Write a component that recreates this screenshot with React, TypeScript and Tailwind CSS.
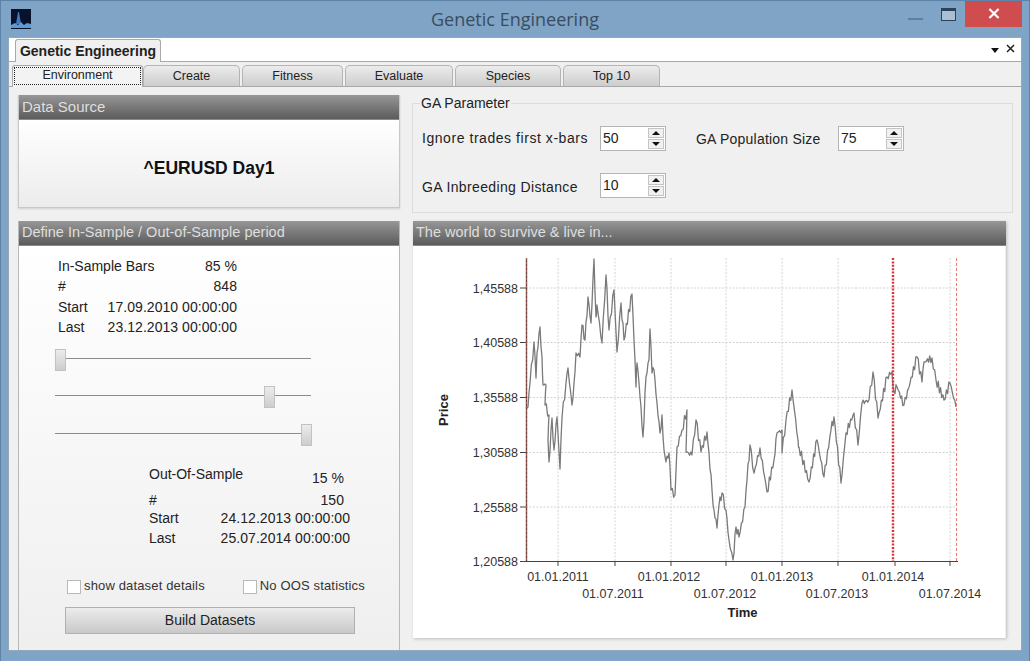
const font = "font-['Liberation_Sans',Arial,sans-serif]";

// rough price curve read off the picture, in page pixels
const anchors: number[][] = [
  [527, 407], [529, 407], [531, 383], [535, 342], [537, 378], [538, 353], [541, 327], [543, 357], [544, 385], [547, 385], [546, 405], [550, 415],
  [549, 440], [550, 462], [553, 418], [555, 450], [558, 417], [561, 469], [563, 418], [567, 383], [569, 368], [573, 405], [575, 383], [577, 353],
  [581, 357], [583, 325], [586, 340], [589, 297], [592, 323], [595, 259], [597, 317], [598, 305], [603, 343], [607, 275], [610, 330], [615, 290],
  [618, 352], [622, 303], [625, 340], [633, 294], [635, 340], [637, 387], [638, 363], [640, 383], [642, 407], [644, 437], [647, 377], [650, 360],
  [651, 329], [653, 373], [655, 370], [658, 403], [661, 433], [663, 415], [665, 450], [667, 462], [670, 453], [672, 490], [676, 495], [678, 447],
  [683, 430], [688, 410], [687, 452], [693, 455], [697, 420], [702, 452], [708, 432], [710, 453], [713, 490], [715, 510], [718, 528], [720, 505],
  [723, 493], [727, 510], [730, 540], [734, 560], [737, 527], [740, 537], [746, 507], [748, 480], [751, 445], [755, 473], [761, 448], [768, 492],
  [775, 460], [778, 433], [783, 430], [783, 453], [787, 420], [793, 390], [799, 440], [800, 447], [810, 482], [818, 440], [825, 477], [832, 430],
  [835, 417], [842, 483], [847, 433], [855, 413], [859, 445], [863, 403], [870, 400], [874, 372], [879, 418], [888, 377], [893, 372], [895, 392],
  [898, 387], [905, 405], [918, 357], [923, 382], [925, 362], [933, 358], [937, 380], [945, 400], [951, 383], [957, 407],
];

// the real series is a lot more jagged than the anchors, so add some fixed noise between them
const pricePoints = anchors
  .flatMap((p, i) => {
    const n = anchors[i + 1];
    if (!n) return [p];
    const out = [p];
    const steps = Math.max(2, Math.round((n[0] - p[0]) / 1.2));
    for (let s = 1; s < steps; s++) {
      const f = s / steps;
      const noise = Math.sin(i * 7.1 + s * 2.9) * 4.5;
      const y = p[1] + (n[1] - p[1]) * f + noise;
      out.push([p[0] + (n[0] - p[0]) * f, Math.min(560, Math.max(259, y))]);
    }
    return out;
  })
  .map(p => p.join(','))
  .join(' ');

const gridY = [288, 342.5, 397.5, 452.5, 507];
const gridX = [559, 616, 672, 727, 783, 839, 951];
const ticksX = [559, 616, 672, 727, 783, 839, 896, 951];
const priceLabels = [
  { y: 288, t: '1,45588' },
  { y: 342.5, t: '1,40588' },
  { y: 397.5, t: '1,35588' },
  { y: 452.5, t: '1,30588' },
  { y: 507, t: '1,25588' },
  { y: 561.5, t: '1,20588' },
];
const dateLabels = [
  { x: 559, y: 581, t: '01.01.2011' },
  { x: 614, y: 598, t: '01.07.2011' },
  { x: 670, y: 581, t: '01.01.2012' },
  { x: 726, y: 598, t: '01.07.2012' },
  { x: 783, y: 581, t: '01.01.2013' },
  { x: 838, y: 598, t: '01.07.2013' },
  { x: 894, y: 581, t: '01.01.2014' },
  { x: 951, y: 598, t: '01.07.2014' },
];

function PriceChart() {
  return (
    <svg viewBox="414 246 592 392" className="block w-[592px] h-[392px] bg-white">
      {gridY.map(y => (
        <line key={y} x1={527} x2={957} y1={y} y2={y} stroke="#d2d2d2" strokeDasharray="2 1.5" />
      ))}
      {gridX.map(x => (
        <line key={x} x1={x} x2={x} y1={258} y2={561} stroke="#d6d6d6" strokeDasharray="2 1.5" />
      ))}
      <polyline points={pricePoints} fill="none" stroke="#7a7a7a" strokeWidth={1.3} strokeLinejoin="round" />
      <line x1={527.5} x2={527.5} y1={258} y2={562} stroke="#5b4642" strokeWidth={1.4} />
      <line x1={527.5} x2={527.5} y1={258} y2={562} stroke="#a8584c" strokeWidth={1} strokeDasharray="2 2" />
      <line x1={894} x2={894} y1={258} y2={561} stroke="#d8343a" strokeWidth={2.4} strokeDasharray="2 1.4" />
      <line x1={957.5} x2={957.5} y1={258} y2={561} stroke="#e2806f" strokeWidth={1} strokeDasharray="3 2" />
      <line x1={527} x2={959} y1={561.5} y2={561.5} stroke="#444" strokeWidth={1.2} />
      {ticksX.map(x => (
        <line key={x} x1={x} x2={x} y1={561} y2={566} stroke="#444" />
      ))}
      {gridY.map(y => (
        <line key={y} x1={521} x2={527} y1={y} y2={y} stroke="#444" />
      ))}
      <line x1={521} x2={527} y1={561.5} y2={561.5} stroke="#444" />
      {priceLabels.map(l => (
        <text key={l.t} x={519} y={l.y + 4.5} textAnchor="end" fontSize={12.5} fill="#333">
          {l.t}
        </text>
      ))}
      {dateLabels.map(l => (
        <text key={l.t} x={l.x} y={l.y} textAnchor="middle" fontSize={12.5} fill="#333">
          {l.t}
        </text>
      ))}
      <text x={743.5} y={617} textAnchor="middle" fontSize={13} fontWeight="bold" fill="#222">
        Time
      </text>
      <text transform="translate(449 410) rotate(-90)" textAnchor="middle" fontSize={13} fontWeight="bold" fill="#222">
        Price
      </text>
    </svg>
  );
}

function CardHeader({ title, size = 'text-[14.5px]' }: { title: string; size?: string }) {
  return (
    <div className={`h-[25px] shrink-0 flex items-center pl-[3px] ${size} text-[#dedede] bg-linear-to-b from-[#979797] to-[#5c5c5c] border-b border-[#8a8a8a]`}>
      {title}
    </div>
  );
}

function Spinner({ value }: { value: string }) {
  return (
    <div className="w-[66px] h-[25px] flex items-center justify-between bg-white border border-[#b4b4b4] pl-[2px] pr-[1px] text-[14px] text-[#222]">
      <span>{value}</span>
      <div className="flex flex-col w-[16px] h-[21px] gap-px">
        <div className="flex-1 flex items-center justify-center bg-[#f1f1f1] border border-[#c4c4c4]">
          <div className="w-0 h-0 border-x-[4px] border-x-transparent border-b-[4px] border-b-[#111]" />
        </div>
        <div className="flex-1 flex items-center justify-center bg-[#f1f1f1] border border-[#c4c4c4]">
          <div className="w-0 h-0 border-x-[4px] border-x-transparent border-t-[4px] border-t-[#111]" />
        </div>
      </div>
    </div>
  );
}

function Slider({ thumb }: { thumb: string }) {
  return (
    <div className="relative w-[256px] h-[22px]">
      <div className="absolute left-0 right-0 top-[9px] h-px bg-[#8c8c8c]" />
      <div className={`absolute top-0 w-[11px] h-[22px] bg-linear-to-b from-[#ececec] to-[#cdcdcd] border border-[#c2c2c2] ${thumb}`} />
    </div>
  );
}

function Row({ label, value, className }: { label: string; value: string; className?: string }) {
  return (
    <div className={`h-5 flex items-center justify-between text-[14px] text-[#222] ${className ?? ''}`}>
      <span>{label}</span>
      <span className="tracking-[0.05px]">{value}</span>
    </div>
  );
}

function Check({ label }: { label: string }) {
  return (
    <div className="flex items-center gap-[3px] text-[13px] text-[#333] tracking-[0.15px]">
      <div className="w-[14px] h-[14px] bg-white border border-[#b9b9b9]" />
      <span className="-mt-[2px]">{label}</span>
    </div>
  );
}

const tabs = [
  { name: 'Create', w: 'w-[97px]' },
  { name: 'Fitness', w: 'w-[101px]' },
  { name: 'Evaluate', w: 'w-[108px]' },
  { name: 'Species', w: 'w-[106px]' },
  { name: 'Top 10', w: 'w-[97px]' },
];

export default function App() {
  return (
    <div className={`${font} relative w-[1030px] h-[661px] overflow-hidden bg-[#7fa4c6] border-t border-x border-[#5d84a8] flex flex-col`}>
      {/* title bar */}
      <div className="relative h-[37px] shrink-0 flex items-center justify-center">
        <svg viewBox="0 0 20 20" className="absolute left-[10px] top-[8px] w-[20px] h-[20px]">
          <rect width="20" height="20" fill="#08122a" />
          <path d="M5 15 L7 3 L8 3 L10 15 Z" fill="#3f78c0" />
          <path d="M0 16 L4 14 L7 16 L10 13 L13 16 L16 14 L20 15 L20 19 L0 19 Z" fill="#5c9ad0" />
        </svg>
        <span className="text-[18px] text-[#3a4d60] font-['Open_Sans',sans-serif]">Genetic Engineering</span>
        <div className="absolute right-[7px] top-[-1px] flex items-start">
          <div className="w-[15px] h-[2px] bg-[#5f7f9f] mt-[18px] mr-[18px]" />
          <div className="w-[15px] h-[13px] mt-[8px] mr-[9px] bg-[#a9bfd4] border border-[#2c4258] border-t-[3px]" />
          <div className="w-[57px] h-[27px] bg-[#cf4d4f] flex items-center justify-center">
            <svg viewBox="0 0 12 12" className="w-[12px] h-[11px]">
              <path d="M1 1 L11 11 M11 1 L1 11" stroke="#fff" strokeWidth="2.4" />
            </svg>
          </div>
        </div>
      </div>

      {/* client area */}
      <div className="mx-2 w-[1012px] h-[612px] shrink-0 bg-[#f0f0f0] flex flex-col shadow-[0_0_0_1px_#94a9bc]">
        <div className="relative h-[24px] shrink-0 bg-white border-b border-[#a9a9a9] pl-[6px] flex items-end">
          <div className="w-[146px] h-[23px] -mb-px flex items-center justify-center bg-[#f0f0f0] border border-b-0 border-[#a9a9a9] rounded-t-[3px] text-[14px] font-bold text-[#222]">
            Genetic Engineering
          </div>
          <div className="absolute right-[22px] top-[10px] w-0 h-0 border-x-[4px] border-x-transparent border-t-[5px] border-t-[#111]" />
          <svg viewBox="0 0 9 9" className="absolute right-[6px] top-[6px] w-[9px] h-[9px]">
            <path d="M1 1 L8 8 M8 1 L1 8" stroke="#222" strokeWidth="1.5" />
          </svg>
        </div>

        <div className="h-[25px] shrink-0 flex items-end pl-[3px] border-b border-[#a9a9a9]">
          <div className="w-[131px] h-[22px] p-px -mb-px bg-[#f3f3f3] border border-b-0 border-[#a9a9a9] rounded-t-[3px]">
            <div className="h-[18px] flex items-center justify-center border border-dotted border-[#222] text-[12.5px] text-[#222] pb-px">
              Environment
            </div>
          </div>
          {tabs.map(t => (
            <div
              key={t.name}
              className={`${t.w} h-[21px] mr-[2px] flex items-center justify-center bg-linear-to-b from-[#ececec] to-[#cdcdcd] border border-b-0 border-[#b4b4b4] rounded-t-[5px] text-[12.5px] text-[#222]`}
            >
              {t.name}
            </div>
          ))}
        </div>

        <div className="flex-1 min-h-0 flex pl-[9px] pt-[8px] gap-3">
          {/* left column */}
          <div className="w-[382px] shrink-0 flex flex-col gap-[13px]">
            <div className="h-[113px] shrink-0 flex flex-col border-x border-b border-[#c8c8c8] shadow-[0_1px_2px_#d0d0d0]">
              <CardHeader title="Data Source" size="text-[15px]" />
              <div className="flex-1 flex items-center justify-center pt-[9px] bg-linear-to-b from-white to-[#ececec] text-[17.5px] font-bold text-[#111]">
                ^EURUSD Day1
              </div>
            </div>
            <div className="flex-1 min-h-0 flex flex-col border-x border-[#b8b8b8]">
              <CardHeader title="Define In-Sample / Out-of-Sample period" />
              <div className="flex-1 min-h-0 bg-linear-to-b from-white to-[#efefef] pt-[10px] pl-[36px]">
                <div className="w-[179px] ml-[3px]">
                  <Row label="In-Sample Bars" value="85 %" />
                  <Row label="#" value="848" />
                  <Row label="Start" value="17.09.2010 00:00:00" className="mt-px" />
                  <Row label="Last" value="23.12.2013 00:00:00" />
                </div>
                <div className="mt-[12px] flex flex-col">
                  <Slider thumb="left-0" />
                  <div className="mt-[15px]">
                    <Slider thumb="left-[209px]" />
                  </div>
                  <div className="mt-[16px]">
                    <Slider thumb="left-[246px]" />
                  </div>
                </div>
                <div className="w-[201px] ml-[94px] mt-[18px]">
                  <div className="h-5 flex justify-between text-[14px] text-[#222] pr-[6px]">
                    <span>Out-Of-Sample</span>
                    <span className="mt-1">15 %</span>
                  </div>
                  <Row label="#" value="150" className="mt-[6px] pr-[6px]" />
                  <div className="-mt-[2px]">
                    <Row label="Start" value="24.12.2013 00:00:00" />
                    <Row label="Last" value="25.07.2014 00:00:00" />
                  </div>
                </div>
                <div className="flex gap-[38px] ml-[12px] mt-[30px]">
                  <Check label="show dataset details" />
                  <Check label="No OOS statistics" />
                </div>
                <div className="w-[290px] h-[27px] ml-[10px] mt-[11px] flex items-center justify-center bg-linear-to-b from-[#ececec] to-[#c9c9c9] border border-[#b0b0b0] text-[14px] text-[#222]">
                  Build Datasets
                </div>
              </div>
            </div>
          </div>

          {/* right column */}
          <div className="flex-1 min-w-0 flex flex-col">
            <fieldset className="w-[601px] h-[118px] shrink-0 border border-[#dcdcdc] px-[9px] pb-[4px]">
              <legend className="-ml-[2px] px-[1px] text-[14px] leading-4 text-[#222]">GA Parameter</legend>
              <div className="flex items-center mt-[15px] text-[14px] text-[#222]">
                <span className="w-[178px] tracking-[0.55px]">Ignore trades first x-bars</span>
                <Spinner value="50" />
                <span className="ml-[30px] w-[142px] tracking-[0.22px] pt-[2px]">GA Population Size</span>
                <Spinner value="75" />
              </div>
              <div className="flex items-center mt-[21px] text-[14px] text-[#222]">
                <span className="w-[178px] tracking-[0.36px] pt-[5px]">GA Inbreeding Distance</span>
                <Spinner value="10" />
              </div>
            </fieldset>
            <div className="w-[593px] ml-px mt-[8px] shrink-0 flex flex-col shadow-[1px_1px_3px_#bdbdbd]">
              <CardHeader title="The world to survive & live in..." />
              <PriceChart />
            </div>
          </div>
        </div>
      </div>
    </div>
  );
}
